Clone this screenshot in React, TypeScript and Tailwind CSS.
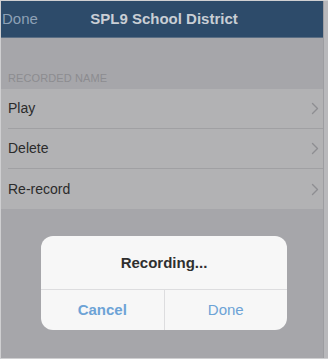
import React from "react";

function Chevron() {
  return (
    <svg width="8" height="13" viewBox="0 0 8 13" fill="none">
      <path d="M1.5 1.5 L6.5 6.5 L1.5 11.5" stroke="#8e8e92" strokeWidth="1.4" strokeLinecap="round" strokeLinejoin="round" />
    </svg>
  );
}

function Row({ label, last }: { label: string; last?: boolean }) {
  return (
    <div className="flex h-[40px] items-stretch bg-[#b2b2b4] pl-[7px]">
      <div className={"flex flex-1 items-center justify-between pr-[4px] " + (last ? "" : "border-b border-[#a0a0a3]")}>
        <span className="text-[14px] text-[#2b2b2b]">{label}</span>
        <Chevron />
      </div>
    </div>
  );
}

export default function App() {
  return (
    <div
      className="relative flex h-[359px] w-[328px] overflow-hidden border-t border-l border-b border-[#cfcfd1] bg-[#a6a6aa]"
      style={{ fontFamily: '"Liberation Sans", Arial, sans-serif' }}
    >
      <div className="flex flex-1 flex-col">
        <div className="relative flex h-[37px] items-center bg-[#2d4b6a] border-b border-[#5a6e84]">
          <span className="pl-[1px] text-[15px] text-[#8ea1b6]">Done</span>
          <span className="absolute left-0 right-0 text-center text-[15px] font-bold text-[#c9ced5] pl-[4px]">
            SPL9 School District
          </span>
        </div>
        <div className="h-[32px]" />
        <div className="h-[19px] pl-[7px] text-[11px] tracking-[0.1px] text-[#8c8c90]">RECORDED NAME</div>
        <Row label="Play" />
        <Row label="Delete" />
        <Row label="Re-record" last />
        <div className="flex-1" />
      </div>
      <div className="w-[5px] bg-[#b8b8bb] border-l border-[#9d9da1]" />

      <div className="absolute left-[40px] top-[235px] flex h-[94px] w-[246px] flex-col rounded-[12px] bg-[#f7f7f7]">
        <div className="flex h-[54px] items-center justify-center border-b border-[#dddddf] pt-[2px]">
          <span className="text-[15px] font-bold text-[#2f2f2f]">Recording...</span>
        </div>
        <div className="flex flex-1">
          <div className="flex flex-1 items-center justify-center border-r border-[#dddddf] text-[15px] font-bold text-[#6da3d6]">
            Cancel
          </div>
          <div className="flex flex-1 items-center justify-center text-[15px] text-[#6da3d6]">Done</div>
        </div>
      </div>
    </div>
  );
}
